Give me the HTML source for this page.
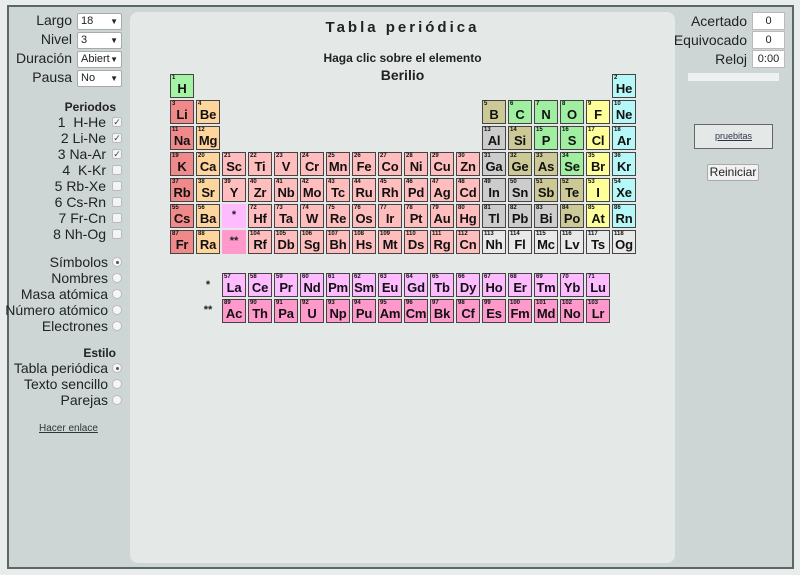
<!DOCTYPE html>
<html><head><meta charset="utf-8">
<style>
*{box-sizing:border-box;margin:0;padding:0}
body{width:800px;height:575px;background:#e8eceb;font-family:"Liberation Sans",Arial,sans-serif;position:relative;overflow:hidden;color:#222}
#frame{position:absolute;left:7px;top:5px;width:787px;height:564px;background:#cdd6d5;border:2px solid #5c6666}
#center{position:absolute;left:130px;top:12px;width:545px;height:551px;background:#e4e8e7;border-radius:8px}
.a{position:absolute}
.lbl{position:absolute;font-size:14px;text-align:right;color:#222}
.sel{position:absolute;left:77px;width:45px;height:17px;background:#fff;border:1px solid #aaa;font-size:11px;line-height:15px;padding-left:3px;border-radius:2px;overflow:hidden}
.sel:after{content:"▼";position:absolute;right:3px;top:0;font-size:8px;background:#fff}
.cb{position:absolute;left:112px;width:10px;height:10px;border:1px solid #bbb;background:#f4f4f4;border-radius:2px;font-size:9px;line-height:8px;text-align:center;color:#444}
.rd{position:absolute;left:112px;width:10px;height:10px;border:1px solid #bbb;background:#f6f6f6;border-radius:50%}
.rd.on:after{content:"";position:absolute;left:2.5px;top:2.5px;width:3px;height:3px;border-radius:50%;background:#555}
.c{position:absolute;width:24px;height:24px;border:1.5px solid #444;font-weight:bold;font-size:13px;text-align:center;line-height:27px;color:#111;letter-spacing:-0.2px}
.c i{position:absolute;left:1px;top:0;font-style:normal;font-size:6px;line-height:7px;font-weight:bold;letter-spacing:0}
.al{background:#f08a8a}.ae{background:#ffd59e}.tm{background:#ffbdbd}.h{background:#a4f3a4}.nb{background:#b6f7f7}.md{background:#ccc996}.nm{background:#a0eea0}.hl{background:#ffff99}.pt{background:#cccccc}.uk{background:#e9e9e9}.ln{background:#ffbbff}.ac{background:#ff99cc}
.ph{position:absolute;width:24px;height:24px;font-weight:bold;font-size:11px;text-align:center;line-height:22px}
</style></head><body>
<div id="frame"></div>
<div id="center"></div>

<div class="lbl" style="left:10px;top:12px;width:62px">Largo</div><div class="sel" style="top:13px">18</div>
<div class="lbl" style="left:10px;top:31px;width:62px">Nivel</div><div class="sel" style="top:32px">3</div>
<div class="lbl" style="left:10px;top:50px;width:62px">Duración</div><div class="sel" style="top:51px">Abierta</div>
<div class="lbl" style="left:10px;top:69px;width:62px">Pausa</div><div class="sel" style="top:70px">No</div>

<div class="lbl" style="left:10px;top:100px;width:106px;font-weight:bold;font-size:12px">Periodos</div>
<div class="lbl" style="left:10px;top:114px;width:96px">1&nbsp; H-He</div><div class="cb" style="top:117px">✓</div>
<div class="lbl" style="left:10px;top:130px;width:96px">2 Li-Ne</div><div class="cb" style="top:133px">✓</div>
<div class="lbl" style="left:10px;top:146px;width:96px">3 Na-Ar</div><div class="cb" style="top:149px">✓</div>
<div class="lbl" style="left:10px;top:162px;width:96px">4&nbsp; K-Kr</div><div class="cb" style="top:165px"></div>
<div class="lbl" style="left:10px;top:178px;width:96px">5 Rb-Xe</div><div class="cb" style="top:181px"></div>
<div class="lbl" style="left:10px;top:194px;width:96px">6 Cs-Rn</div><div class="cb" style="top:197px"></div>
<div class="lbl" style="left:10px;top:210px;width:96px">7 Fr-Cn</div><div class="cb" style="top:213px"></div>
<div class="lbl" style="left:10px;top:226px;width:96px">8 Nh-Og</div><div class="cb" style="top:229px"></div>

<div class="lbl" style="left:0;top:254px;width:108px">Símbolos</div><div class="rd on" style="top:257px"></div>
<div class="lbl" style="left:0;top:270px;width:108px">Nombres</div><div class="rd" style="top:273px"></div>
<div class="lbl" style="left:0;top:286px;width:108px">Masa atómica</div><div class="rd" style="top:289px"></div>
<div class="lbl" style="left:0;top:302px;width:108px">Número atómico</div><div class="rd" style="top:305px"></div>
<div class="lbl" style="left:0;top:318px;width:108px">Electrones</div><div class="rd" style="top:321px"></div>

<div class="lbl" style="left:0;top:346px;width:116px;font-weight:bold;font-size:12px">Estilo</div>
<div class="lbl" style="left:0;top:360px;width:108px">Tabla periódica</div><div class="rd on" style="top:363px"></div>
<div class="lbl" style="left:0;top:376px;width:108px">Texto sencillo</div><div class="rd" style="top:379px"></div>
<div class="lbl" style="left:0;top:392px;width:108px">Parejas</div><div class="rd" style="top:395px"></div>
<div class="a" style="left:39px;top:423px;font-size:10px;text-decoration:underline;color:#333">Hacer enlace</div>

<div class="a" style="left:130px;top:19px;width:545px;text-align:center;font-weight:bold;font-size:15px;letter-spacing:3px;color:#222">Tabla periódica</div>
<div class="a" style="left:130px;top:51px;width:545px;text-align:center;font-weight:bold;font-size:12px;color:#222">Haga clic sobre el elemento</div>
<div class="a" style="left:130px;top:67px;width:545px;text-align:center;font-weight:bold;font-size:14px;color:#222">Berilio</div>

<div class="lbl" style="left:670px;top:13px;width:77px">Acertado</div><div class="a" style="left:752px;top:12px;width:33px;height:18px;background:#fff;border:1px solid #bbb;font-size:11px;text-align:center;line-height:16px">0</div>
<div class="lbl" style="left:670px;top:32px;width:77px">Equivocado</div><div class="a" style="left:752px;top:31px;width:33px;height:18px;background:#fff;border:1px solid #bbb;font-size:11px;text-align:center;line-height:16px">0</div>
<div class="lbl" style="left:670px;top:51px;width:77px">Reloj</div><div class="a" style="left:752px;top:50px;width:33px;height:18px;background:#fff;border:1px solid #bbb;font-size:11px;text-align:center;line-height:16px">0:00</div>
<div class="a" style="left:688px;top:73px;width:91px;height:8px;background:#eef1f1"></div>
<div class="a" style="left:694px;top:124px;width:79px;height:25px;background:#e4e8e7;border:1px solid #666;font-size:9px;text-align:center;line-height:23px;text-decoration:underline;color:#334">pruebitas</div>
<div class="a" style="left:707px;top:164px;width:52px;height:17px;background:#f2f2f2;border:1px solid #aaa;border-radius:2px;font-size:12px;text-align:center;line-height:15px">Reiniciar</div>

<div class="c h" style="left:170px;top:74px"><i>1</i>H</div>
<div class="c nb" style="left:612px;top:74px"><i>2</i>He</div>

<div class="c al" style="left:170px;top:100px"><i>3</i>Li</div>
<div class="c ae" style="left:196px;top:100px"><i>4</i>Be</div>
<div class="c md" style="left:482px;top:100px"><i>5</i>B</div>
<div class="c nm" style="left:508px;top:100px"><i>6</i>C</div>
<div class="c nm" style="left:534px;top:100px"><i>7</i>N</div>
<div class="c nm" style="left:560px;top:100px"><i>8</i>O</div>
<div class="c hl" style="left:586px;top:100px"><i>9</i>F</div>
<div class="c nb" style="left:612px;top:100px"><i>10</i>Ne</div>

<div class="c al" style="left:170px;top:126px"><i>11</i>Na</div>
<div class="c ae" style="left:196px;top:126px"><i>12</i>Mg</div>
<div class="c pt" style="left:482px;top:126px"><i>13</i>Al</div>
<div class="c md" style="left:508px;top:126px"><i>14</i>Si</div>
<div class="c nm" style="left:534px;top:126px"><i>15</i>P</div>
<div class="c nm" style="left:560px;top:126px"><i>16</i>S</div>
<div class="c hl" style="left:586px;top:126px"><i>17</i>Cl</div>
<div class="c nb" style="left:612px;top:126px"><i>18</i>Ar</div>

<div class="c al" style="left:170px;top:152px"><i>19</i>K</div>
<div class="c ae" style="left:196px;top:152px"><i>20</i>Ca</div>
<div class="c tm" style="left:222px;top:152px"><i>21</i>Sc</div>
<div class="c tm" style="left:248px;top:152px"><i>22</i>Ti</div>
<div class="c tm" style="left:274px;top:152px"><i>23</i>V</div>
<div class="c tm" style="left:300px;top:152px"><i>24</i>Cr</div>
<div class="c tm" style="left:326px;top:152px"><i>25</i>Mn</div>
<div class="c tm" style="left:352px;top:152px"><i>26</i>Fe</div>
<div class="c tm" style="left:378px;top:152px"><i>27</i>Co</div>
<div class="c tm" style="left:404px;top:152px"><i>28</i>Ni</div>
<div class="c tm" style="left:430px;top:152px"><i>29</i>Cu</div>
<div class="c tm" style="left:456px;top:152px"><i>30</i>Zn</div>
<div class="c pt" style="left:482px;top:152px"><i>31</i>Ga</div>
<div class="c md" style="left:508px;top:152px"><i>32</i>Ge</div>
<div class="c md" style="left:534px;top:152px"><i>33</i>As</div>
<div class="c nm" style="left:560px;top:152px"><i>34</i>Se</div>
<div class="c hl" style="left:586px;top:152px"><i>35</i>Br</div>
<div class="c nb" style="left:612px;top:152px"><i>36</i>Kr</div>

<div class="c al" style="left:170px;top:178px"><i>37</i>Rb</div>
<div class="c ae" style="left:196px;top:178px"><i>38</i>Sr</div>
<div class="c tm" style="left:222px;top:178px"><i>39</i>Y</div>
<div class="c tm" style="left:248px;top:178px"><i>40</i>Zr</div>
<div class="c tm" style="left:274px;top:178px"><i>41</i>Nb</div>
<div class="c tm" style="left:300px;top:178px"><i>42</i>Mo</div>
<div class="c tm" style="left:326px;top:178px"><i>43</i>Tc</div>
<div class="c tm" style="left:352px;top:178px"><i>44</i>Ru</div>
<div class="c tm" style="left:378px;top:178px"><i>45</i>Rh</div>
<div class="c tm" style="left:404px;top:178px"><i>46</i>Pd</div>
<div class="c tm" style="left:430px;top:178px"><i>47</i>Ag</div>
<div class="c tm" style="left:456px;top:178px"><i>48</i>Cd</div>
<div class="c pt" style="left:482px;top:178px"><i>49</i>In</div>
<div class="c pt" style="left:508px;top:178px"><i>50</i>Sn</div>
<div class="c md" style="left:534px;top:178px"><i>51</i>Sb</div>
<div class="c md" style="left:560px;top:178px"><i>52</i>Te</div>
<div class="c hl" style="left:586px;top:178px"><i>53</i>I</div>
<div class="c nb" style="left:612px;top:178px"><i>54</i>Xe</div>

<div class="c al" style="left:170px;top:204px"><i>55</i>Cs</div>
<div class="c ae" style="left:196px;top:204px"><i>56</i>Ba</div>
<div class="ph ln" style="left:222px;top:204px">*</div>
<div class="c tm" style="left:248px;top:204px"><i>72</i>Hf</div>
<div class="c tm" style="left:274px;top:204px"><i>73</i>Ta</div>
<div class="c tm" style="left:300px;top:204px"><i>74</i>W</div>
<div class="c tm" style="left:326px;top:204px"><i>75</i>Re</div>
<div class="c tm" style="left:352px;top:204px"><i>76</i>Os</div>
<div class="c tm" style="left:378px;top:204px"><i>77</i>Ir</div>
<div class="c tm" style="left:404px;top:204px"><i>78</i>Pt</div>
<div class="c tm" style="left:430px;top:204px"><i>79</i>Au</div>
<div class="c tm" style="left:456px;top:204px"><i>80</i>Hg</div>
<div class="c pt" style="left:482px;top:204px"><i>81</i>Tl</div>
<div class="c pt" style="left:508px;top:204px"><i>82</i>Pb</div>
<div class="c pt" style="left:534px;top:204px"><i>83</i>Bi</div>
<div class="c md" style="left:560px;top:204px"><i>84</i>Po</div>
<div class="c hl" style="left:586px;top:204px"><i>85</i>At</div>
<div class="c nb" style="left:612px;top:204px"><i>86</i>Rn</div>

<div class="c al" style="left:170px;top:230px"><i>87</i>Fr</div>
<div class="c ae" style="left:196px;top:230px"><i>88</i>Ra</div>
<div class="ph ac" style="left:222px;top:230px">**</div>
<div class="c tm" style="left:248px;top:230px"><i>104</i>Rf</div>
<div class="c tm" style="left:274px;top:230px"><i>105</i>Db</div>
<div class="c tm" style="left:300px;top:230px"><i>106</i>Sg</div>
<div class="c tm" style="left:326px;top:230px"><i>107</i>Bh</div>
<div class="c tm" style="left:352px;top:230px"><i>108</i>Hs</div>
<div class="c tm" style="left:378px;top:230px"><i>109</i>Mt</div>
<div class="c tm" style="left:404px;top:230px"><i>110</i>Ds</div>
<div class="c tm" style="left:430px;top:230px"><i>111</i>Rg</div>
<div class="c tm" style="left:456px;top:230px"><i>112</i>Cn</div>
<div class="c uk" style="left:482px;top:230px"><i>113</i>Nh</div>
<div class="c uk" style="left:508px;top:230px"><i>114</i>Fl</div>
<div class="c uk" style="left:534px;top:230px"><i>115</i>Mc</div>
<div class="c uk" style="left:560px;top:230px"><i>116</i>Lv</div>
<div class="c uk" style="left:586px;top:230px"><i>117</i>Ts</div>
<div class="c uk" style="left:612px;top:230px"><i>118</i>Og</div>

<div class="ph" style="left:196px;top:274px">*</div>
<div class="c ln" style="left:222px;top:273px"><i>57</i>La</div>
<div class="c ln" style="left:248px;top:273px"><i>58</i>Ce</div>
<div class="c ln" style="left:274px;top:273px"><i>59</i>Pr</div>
<div class="c ln" style="left:300px;top:273px"><i>60</i>Nd</div>
<div class="c ln" style="left:326px;top:273px"><i>61</i>Pm</div>
<div class="c ln" style="left:352px;top:273px"><i>62</i>Sm</div>
<div class="c ln" style="left:378px;top:273px"><i>63</i>Eu</div>
<div class="c ln" style="left:404px;top:273px"><i>64</i>Gd</div>
<div class="c ln" style="left:430px;top:273px"><i>65</i>Tb</div>
<div class="c ln" style="left:456px;top:273px"><i>66</i>Dy</div>
<div class="c ln" style="left:482px;top:273px"><i>67</i>Ho</div>
<div class="c ln" style="left:508px;top:273px"><i>68</i>Er</div>
<div class="c ln" style="left:534px;top:273px"><i>69</i>Tm</div>
<div class="c ln" style="left:560px;top:273px"><i>70</i>Yb</div>
<div class="c ln" style="left:586px;top:273px"><i>71</i>Lu</div>

<div class="ph" style="left:196px;top:299px">**</div>
<div class="c ac" style="left:222px;top:299px"><i>89</i>Ac</div>
<div class="c ac" style="left:248px;top:299px"><i>90</i>Th</div>
<div class="c ac" style="left:274px;top:299px"><i>91</i>Pa</div>
<div class="c ac" style="left:300px;top:299px"><i>92</i>U</div>
<div class="c ac" style="left:326px;top:299px"><i>93</i>Np</div>
<div class="c ac" style="left:352px;top:299px"><i>94</i>Pu</div>
<div class="c ac" style="left:378px;top:299px"><i>95</i>Am</div>
<div class="c ac" style="left:404px;top:299px"><i>96</i>Cm</div>
<div class="c ac" style="left:430px;top:299px"><i>97</i>Bk</div>
<div class="c ac" style="left:456px;top:299px"><i>98</i>Cf</div>
<div class="c ac" style="left:482px;top:299px"><i>99</i>Es</div>
<div class="c ac" style="left:508px;top:299px"><i>100</i>Fm</div>
<div class="c ac" style="left:534px;top:299px"><i>101</i>Md</div>
<div class="c ac" style="left:560px;top:299px"><i>102</i>No</div>
<div class="c ac" style="left:586px;top:299px"><i>103</i>Lr</div>
</body></html>
